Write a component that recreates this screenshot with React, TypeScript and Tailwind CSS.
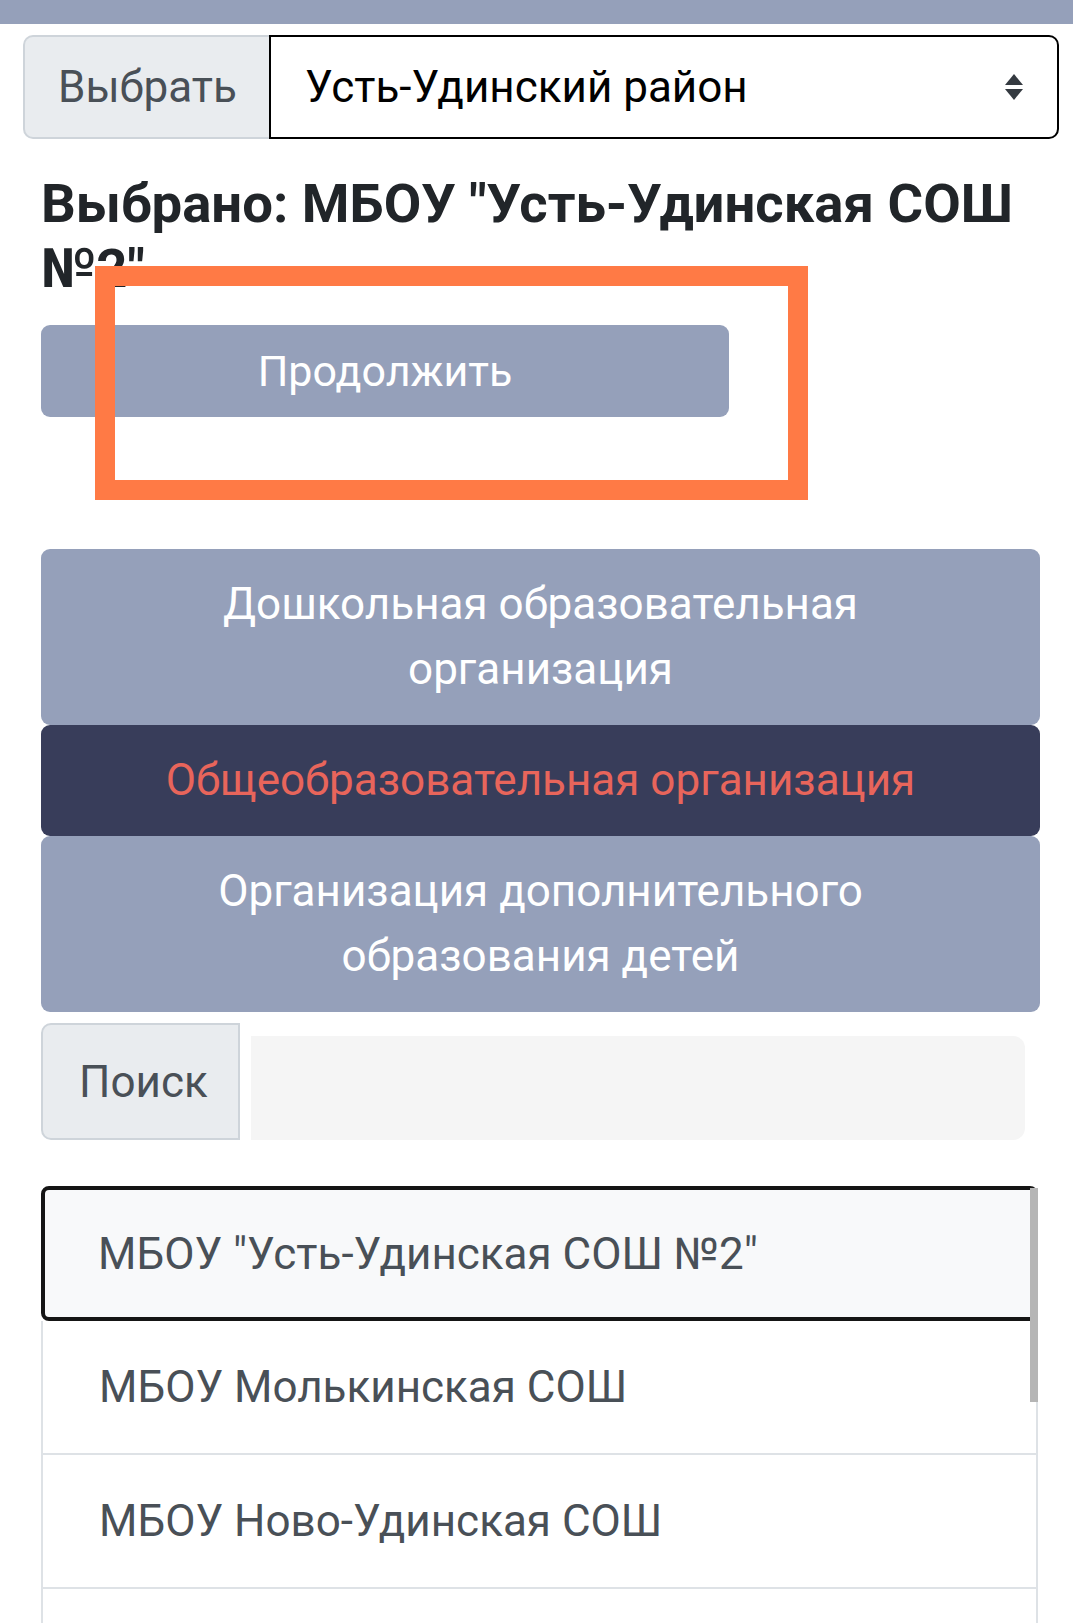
import React from "react";

const categories = [
  { label: "Дошкольная образовательная организация", active: false },
  { label: "Общеобразовательная организация", active: true },
  { label: "Организация дополнительного образования детей", active: false },
];

const schools = [
  'МБОУ "Усть-Удинская СОШ №2"',
  "МБОУ Молькинская СОШ",
  "МБОУ Ново-Удинская СОШ",
  "",
];

function SelectArrows() {
  return (
    <svg width="22" height="28" viewBox="0 0 22 28" aria-hidden="true">
      <path d="M11 1 L20 12 H2 Z" fill="#343a40" />
      <path d="M11 27 L20 16 H2 Z" fill="#343a40" />
    </svg>
  );
}

export default function App() {
  return (
    <div
      className="relative w-[1073px] min-h-[1623px] overflow-hidden bg-white text-[#212529]"
      style={{ fontFamily: "Roboto, 'Noto Sans', sans-serif" }}
    >
      <div className="h-[24px] bg-[#95a0ba]" />

      <div className="ml-[23px] mr-[14px] mt-[11px] flex h-[104px]">
        <div className="flex w-[246px] items-center rounded-l-[10px] border-2 border-r-0 border-[#ced4da] bg-[#e9ecef] pl-[33px] text-[44px] text-[#495057]">
          Выбрать
        </div>
        <div className="flex flex-1 items-center justify-between rounded-r-[10px] border-2 border-black pl-[34px] pr-[32px] text-[44px] text-black">
          <span>Усть-Удинский район</span>
          <SelectArrows />
        </div>
      </div>

      <div className="mx-[41px]">
        <h2 className="mt-[32px] text-[54.5px] font-bold leading-[65px] text-[#212529]">
          Выбрано: МБОУ "Усть-Удинская СОШ №2"
        </h2>

        <button className="mt-[24px] flex h-[92px] w-[688px] items-center justify-center rounded-[9px] bg-[#95a0ba] text-[43px] text-white">
          Продолжить
        </button>

        <div className="mt-[132px] flex w-[999px] flex-col">
          {categories.map((c) => (
            <div
              key={c.label}
              className={
                c.active
                  ? "rounded-[9px] bg-[#383d5a] px-[100px] py-[23px] text-center text-[44px] leading-[65px] text-[#e8655b]"
                  : "rounded-[9px] bg-[#95a0ba] px-[100px] py-[23px] text-center text-[44px] leading-[65px] text-white"
              }
            >
              {c.label}
            </div>
          ))}
        </div>

        <div className="mt-[11px] flex h-[117px] w-[984px] items-stretch">
          <div className="flex w-[199px] items-center rounded-l-[10px] border-2 border-[#ced4da] bg-[#e9ecef] pl-[36px] text-[44px] text-[#495057]">
            Поиск
          </div>
          <div className="ml-[11px] mt-[13px] flex-1 rounded-r-[12px] bg-[#f5f5f5]" />
        </div>

        <div className="relative mt-[46px] w-[997px]">
          <ul className="flex flex-col">
            {schools.map((s, i) =>
              i === 0 ? (
                <li
                  key={i}
                  className="flex h-[135px] items-center rounded-[8px] border-[4px] border-[#151515] bg-[#f8f9fa] pl-[53px] text-[44px] text-[#495057]"
                >
                  {s}
                </li>
              ) : (
                <li
                  key={i}
                  className="flex h-[134px] items-center border-x-2 border-b-2 border-[#dee2e6] pl-[56px] text-[44px] text-[#495057]"
                >
                  {s}
                </li>
              )
            )}
          </ul>
          <div className="absolute right-0 top-[2px] h-[214px] w-[8px] bg-[#b5b5b5]" />
        </div>
      </div>

      <div className="absolute left-[95px] top-[266px] h-[234px] w-[713px] border-[20px] border-[#ff7a45]" />
    </div>
  );
}
